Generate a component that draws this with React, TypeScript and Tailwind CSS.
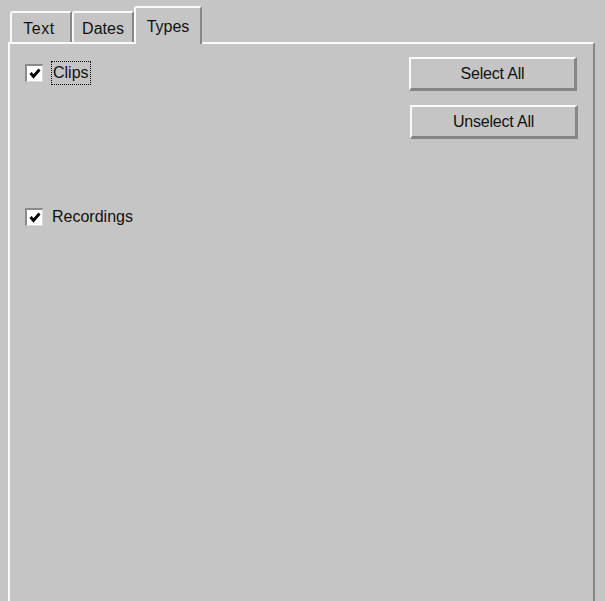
import React from "react";

function Check() {
  return (
    <div className="w-[18px] h-[18px] border-t-2 border-l-2 border-b border-r border-t-[#8a8a8a] border-l-[#8a8a8a] border-b-[#d8d8d8] border-r-[#d8d8d8] bg-white flex items-center justify-center">
      <svg width="12" height="11" viewBox="0 0 12 11">
        <polyline points="1.5,5 4.5,8.5 10.5,1.5" fill="none" stroke="#000" strokeWidth="2.8" />
      </svg>
    </div>
  );
}

function Btn({ label }: { label: string }) {
  return (
    <div className="w-[168px] h-[34px] border-t-2 border-l-2 border-t-[#fafafa] border-l-[#fafafa] border-b-[3px] border-r-[3px] border-b-[#868686] border-r-[#868686] flex items-center justify-center text-[16px] text-[#111] tracking-[-0.2px]">
      {label}
    </div>
  );
}

export default function App() {
  return (
    <div
      className="w-[605px] h-[601px] bg-[#c5c5c5] flex flex-col pl-[8px] pt-[6px] overflow-hidden"
      style={{ fontFamily: '"Liberation Sans", Arial, sans-serif' }}
    >
      <div className="h-[36px] flex items-end pl-[2px]">
        <div className="w-[62px] h-[31px] border-l-2 border-t-2 border-r-2 border-l-[#fafafa] border-t-[#fafafa] border-r-[#868686] rounded-tl-[3px] flex items-center justify-center pt-[3px] pr-[4px] text-[16px] text-[#111] tracking-[0.5px]">
          Text
        </div>
        <div className="w-[62px] h-[31px] border-l-2 border-t-2 border-r-2 border-l-[#fafafa] border-t-[#fafafa] border-r-[#868686] rounded-tl-[3px] flex items-center justify-center pt-[3px] text-[16px] text-[#111]">
          Dates
        </div>
        <div className="relative z-10 -mb-[2px] w-[68px] h-[38px] bg-[#c5c5c5] border-l-2 border-t-2 border-r-2 border-l-[#fafafa] border-t-[#fafafa] border-r-[#868686] rounded-tl-[3px] flex items-start justify-center pt-[7px] text-[16px] text-[#111]">
          Types
        </div>
      </div>
      <div className="flex-1 w-[587px] border-l-2 border-t-2 border-r-2 border-l-[#fafafa] border-t-[#fafafa] border-r-[#868686] flex justify-between">
        <div className="flex flex-col pl-[15px] pt-[17px]">
          <div className="flex items-center h-[24px] gap-[8px]">
            <Check />
            <span className="border border-dotted border-black px-[1px] h-[24px] flex items-center text-[16px] text-[#111]">
              Clips
            </span>
          </div>
          <div className="flex items-center h-[24px] gap-[9px] mt-[120px]">
            <Check />
            <span className="text-[16px] text-[#111]">Recordings</span>
          </div>
        </div>
        <div className="flex flex-col pt-[13px] pr-[16px] gap-[14px]">
          <Btn label="Select All" />
          <div className="ml-[1px] -mr-[1px]">
            <Btn label="Unselect All" />
          </div>
        </div>
      </div>
    </div>
  );
}
